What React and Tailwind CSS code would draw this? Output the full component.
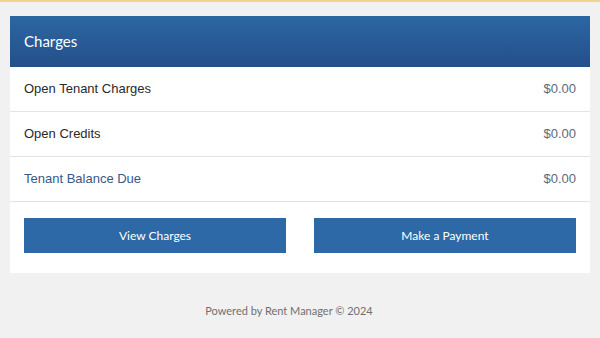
import React from "react";

const rows = [
  { label: "Open Tenant Charges", amount: "$0.00", tone: "text-[#2a2a2a]" },
  { label: "Open Credits", amount: "$0.00", tone: "text-[#2a2a2a]" },
  { label: "Tenant Balance Due", amount: "$0.00", tone: "text-[#35598a]" },
];

const App = () => {
  return (
    <div className="min-h-[338px] w-[600px] border-t-2 border-[#f3d38e] bg-[#f1f1f1] px-[10px] pt-[14px] font-['Lato','Open_Sans',sans-serif]">
      <div className="bg-white pb-[20px]">
        <div className="flex h-[51px] items-center bg-gradient-to-b from-[#2c67a3] to-[#244f8a] px-[14px] text-[15px] text-white">
          Charges
        </div>

        {rows.map((row) => (
          <div
            key={row.label}
            className="flex h-[45px] items-center justify-between border-b border-[#e3e3e3] px-[14px] font-['Liberation_Sans',Arial,sans-serif] text-[13px]"
          >
            <span className={row.tone}>{row.label}</span>
            <span className="text-[#5b6a7a]">{row.amount}</span>
          </div>
        ))}

        <div className="flex gap-[28px] px-[14px] pt-[16px]">
          <button className="h-[35px] flex-1 bg-[#2d69a7] text-[12px] text-white">View Charges</button>
          <button className="h-[35px] flex-1 bg-[#2d69a7] text-[12px] text-white">Make a Payment</button>
        </div>
      </div>

      <div className="pr-[22px] pt-[30px] text-center text-[11px] text-[#707070]">
        Powered by Rent Manager © 2024
      </div>
    </div>
  );
};

export default App;
